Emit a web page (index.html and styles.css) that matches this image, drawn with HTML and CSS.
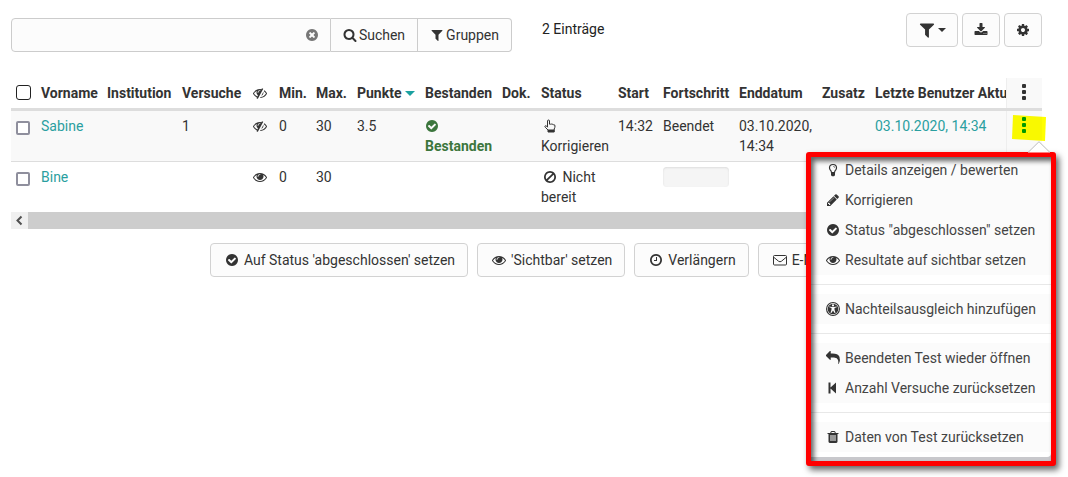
FILE: index.html
```html
<!DOCTYPE html>
<html lang="de">
<head>
<meta charset="utf-8">
<title>Testkorrektur</title>
<meta name="viewport" content="width=device-width, initial-scale=1">
<link rel="stylesheet" href="styles.css">
</head>
<body>
<svg class="sprite" aria-hidden="true">
  <symbol id="times-circle" viewBox="0 0 1792 1792"><path d="M1277 1122q0-26-19-45l-181-181 181-181q19-19 19-45 0-27-19-46l-90-90q-19-19-46-19-26 0-45 19l-181 181-181-181q-19-19-45-19-27 0-46 19l-90 90q-19 19-19 46 0 26 19 45l181 181-181 181q-19 19-19 45 0 27 19 46l90 90q19 19 46 19 26 0 45-19l181-181 181 181q19 19 45 19 27 0 46-19l90-90q19-19 19-46zm387-226q0 209-103 385.500t-279.500 279.500-385.500 103-385.500-103-279.500-279.500-103-385.500 103-385.500 279.500-279.500 385.500-103 385.500 103 279.500 279.500 103 385.500z"/></symbol>
  <symbol id="search" viewBox="0 0 1792 1792"><path d="M1216 832q0-185-131.500-316.500t-316.500-131.500-316.500 131.500-131.500 316.500 131.500 316.500 316.500 131.500 316.500-131.500 131.500-316.500zm512 832q0 52-38 90t-90 38q-54 0-90-38l-343-342q-179 124-399 124-143 0-273.500-55.500t-225-150-150-225-55.500-273.500 55.500-273.500 150-225 225-150 273.500-55.500 273.500 55.500 225 150 150 225 55.500 273.500q0 220-124 399l343 343q37 37 37 90z"/></symbol>
  <symbol id="filter" viewBox="0 0 1792 1792"><path d="M1595 295q17 41-14 70l-493 493v742q0 42-39 59-13 5-25 5-27 0-45-19l-256-256q-19-19-19-45v-486l-493-493q-31-29-14-70 17-39 59-39h1280q42 0 59 39z"/></symbol>
  <symbol id="download" viewBox="0 0 1792 1792"><path d="M1344 1344q0-26-19-45t-45-19-45 19-19 45 19 45 45 19 45-19 19-45zm256 0q0-26-19-45t-45-19-45 19-19 45 19 45 45 19 45-19 19-45zm128-224v320q0 40-28 68t-68 28h-1472q-40 0-68-28t-28-68v-320q0-40 28-68t68-28h465l135 136q58 56 136 56t136-56l136-136h464q40 0 68 28t28 68zm-325-569q17 41-14 70l-448 448q-18 19-45 19t-45-19l-448-448q-31-29-14-70 17-39 59-39h256v-448q0-26 19-45t45-19h256q26 0 45 19t19 45v448h256q42 0 59 39z"/></symbol>
  <symbol id="cog" viewBox="0 0 1792 1792"><path d="M1152 896q0-106-75-181t-181-75-181 75-75 181 75 181 181 75 181-75 75-181zm512-109v222q0 12-8 23t-20 13l-185 28q-19 54-39 91 35 50 107 138 10 12 10 25t-9 23q-27 37-99 108t-94 71q-12 0-26-9l-138-108q-44 23-91 38-16 136-29 186-7 28-36 28h-222q-14 0-24.500-8.500t-11.500-21.500l-28-184q-49-16-90-37l-141 107q-10 9-25 9-14 0-25-11-126-114-165-168-7-10-7-23 0-12 8-23 15-21 51-66.500t54-70.500q-27-50-41-99l-183-27q-13-2-21-12.500t-8-23.500v-222q0-12 8-23t19-13l186-28q14-46 39-92-40-57-107-138-10-12-10-24 0-10 9-23 26-36 98.500-107.500t94.500-71.500q13 0 26 10l138 107q44-23 91-38 16-136 29-186 7-28 36-28h222q14 0 24.500 8.500t11.500 21.500l28 184q49 16 90 37l142-107q9-9 24-9 13 0 25 10 129 119 165 170 7 8 7 22 0 12-8 23-15 21-51 66.500t-54 70.500q26 50 41 98l183 28q13 2 21 12.500t8 23.500z"/></symbol>
  <symbol id="check-circle" viewBox="0 0 1792 1792"><path d="M1412 734q0-28-18-46l-91-90q-19-19-45-19t-45 19l-408 407-226-226q-19-19-45-19t-45 19l-91 90q-18 18-18 46 0 27 18 45l362 362q19 19 45 19 27 0 46-19l543-543q18-18 18-45zm252 162q0 209-103 385.500t-279.500 279.500-385.500 103-385.500-103-279.500-279.500-103-385.500 103-385.500 279.500-279.500 385.500-103 385.500 103 279.500 279.500 103 385.500z"/></symbol>
  <symbol id="eye" viewBox="0 0 1792 1792"><path d="M1664 960q-152-236-381-353 61 104 61 225 0 185-131.500 316.500t-316.500 131.500-316.500-131.500-131.500-316.500q0-121 61-225-229 117-381 353 133 205 333.500 326.500t434.500 121.500 434.500-121.500 333.500-326.500zm-720-384q0-20-14-34t-34-14q-125 0-214.500 89.500t-89.500 214.500q0 20 14 34t34 14 34-14 14-34q0-86 61-147t147-61q20 0 34-14t14-34zm848 384q0 34-20 69-140 230-376.500 368.500t-499.500 138.500-499.500-139-376.500-368q-20-35-20-69t20-69q140-229 376.500-368t499.500-139 499.500 139 376.500 368q20 35 20 69z"/></symbol>
  <symbol id="eye-slash" viewBox="0 0 1792 1792"><path d="M555 1335l78-141q-87-63-136-159t-49-203q0-121 61-225-229 117-381 353 167 258 427 375zm389-759q0-20-14-34t-34-14q-125 0-214.500 89.500t-89.500 214.500q0 20 14 34t34 14 34-14 14-34q0-86 61-147t147-61q20 0 34-14t14-34zm363-191q0 7-1 9-106 189-316 567t-315 566l-49 89q-10 16-28 16-12 0-134-70-16-10-16-28 0-12 44-87-143-65-263.500-173t-208.500-245q-20-31-20-69t20-69q153-235 380-371t496-136q89 0 180 17l54-97q10-16 28-16 5 0 18 6t31 15.500 33 18.500 31.500 18.500 19.500 11.500q16 10 16 27zm37 447q0 139-79 253.500t-209 164.500l280-502q8 45 8 84zm448 128q0 35-20 69-39 64-109 145-150 172-347.500 267t-419.500 95l74-132q212-18 392.500-137t301.500-307q-115-179-282-294l63-112q95 64 182.500 153t144.500 184q20 34 20 69z"/></symbol>
  <symbol id="clock" viewBox="0 0 1792 1792"><path d="M1024 544v448q0 14-9 23t-23 9h-320q-14 0-23-9t-9-23v-64q0-14 9-23t23-9h224v-352q0-14 9-23t23-9h64q14 0 23 9t9 23zm416 352q0-148-73-273t-198-198-273-73-273 73-198 198-73 273 73 273 198 198 273 73 273-73 198-198 73-273zm224 0q0 209-103 385.500t-279.500 279.500-385.500 103-385.500-103-279.500-279.500-103-385.500 103-385.500 279.500-279.500 385.500-103 385.500 103 279.500 279.500 103 385.500z"/></symbol>
  <symbol id="ban" viewBox="0 0 1792 1792"><path d="M1440 893q0-161-87-295l-754 753q137 89 297 89 111 0 211.500-43.500t173.500-116.500 116-174.500 43-212.500zm-999 299l755-754q-135-91-300-91-148 0-273 73t-198 199-73 274q0 162 89 299zm1223-299q0 157-61 300t-163.500 246-245 164-298.500 61-298.500-61-245-164-163.500-246-61-300 61-299.500 163.500-245.500 245-164 298.500-61 298.500 61 245 164 163.500 245.500 61 299.500z"/></symbol>
  <symbol id="pencil" viewBox="0 0 1792 1792"><path d="M491 1536l91-91-235-235-91 91v107h128v128h107zm523-928q0-22-22-22-10 0-17 7l-542 542q-7 7-7 17 0 22 22 22 10 0 17-7l542-542q7-7 7-17zm-54-192l416 416-832 832h-416v-416zm683 96q0 53-37 90l-166 166-416-416 166-165q36-38 90-38 53 0 91 38l235 234q37 39 37 91z"/></symbol>
  <symbol id="reply" viewBox="0 0 1792 1792"><path d="M1792 1120q0 166-127 451-3 7-10.500 24t-13.500 30-13 22q-12 17-28 17-15 0-23.500-10t-8.500-25q0-9 2.500-26.500t2.500-23.500q5-68 5-123 0-112-19.500-200.500t-54-153.500-89-112-114-80.500-140-49-157.500-24.500-175-8h-224v256q0 26-19 45t-45 19-45-19l-512-512q-19-19-19-45t19-45l512-512q19-19 45-19t45 19 19 45v256h224q713 0 875 403 53 134 53 333z"/></symbol>
  <symbol id="trash" viewBox="0 0 1792 1792"><path d="M704 1376v-704q0-14-9-23t-23-9h-64q-14 0-23 9t-9 23v704q0 14 9 23t23 9h64q14 0 23-9t9-23zm256 0v-704q0-14-9-23t-23-9h-64q-14 0-23 9t-9 23v704q0 14 9 23t23 9h64q14 0 23-9t9-23zm256 0v-704q0-14-9-23t-23-9h-64q-14 0-23 9t-9 23v704q0 14 9 23t23 9h64q14 0 23-9t9-23zm-544-992h448l-48-117q-7-9-17-11h-317q-10 2-17 11zm928 32v64q0 14-9 23t-23 9h-96v948q0 83-47 143.500t-113 60.500h-832q-66 0-113-58.500t-47-141.500v-952h-96q-14 0-23-9t-9-23v-64q0-14 9-23t23-9h309l70-167q15-37 54-63t79-26h320q40 0 79 26t54 63l70 167h309q14 0 23 9t9 23z"/></symbol>
  <symbol id="dots" viewBox="0 0 16 18"><rect x="6" y="1" width="4" height="4" rx="1"/><rect x="6" y="7" width="4" height="4" rx="1"/><rect x="6" y="13" width="4" height="4" rx="1"/></symbol>
  <symbol id="envelope" viewBox="0 0 14 14"><path d="M1.500 2.500h11a1 1 0 0 1 1 1v7.500a1 1 0 0 1-1 1h-11a1 1 0 0 1-1-1V3.500a1 1 0 0 1 1-1zM.7 4.200l4.800 4Q7 9.400 8.500 8.200l4.800-4" fill="none" stroke="currentColor"/></symbol>
  <symbol id="hand" viewBox="0 0 14 14"><path d="M4.500 8.200V2q0-1 1-1t1 1v3.200h1q.7-.6 1.500.2.900-.5 1.500.3 1.500-.3 1.500 1.300 0 1.500-.8 3v3H5V11L2.200 8.200q-.7-.9.100-1.400.700-.4 1.300.3z" fill="none" stroke="currentColor" stroke-linejoin="round"/><path d="M5 10.500h6.300V13H5z"/></symbol>
  <symbol id="bulb" viewBox="0 0 14 14"><path d="M5.500 9.500Q5.300 8 4.200 6.900 3.500 6 3.500 4.800 3.500 1.500 7 1.500t3.500 3.300q0 1.200-.7 2.100Q8.700 8 8.500 9.500z" fill="none" stroke="currentColor" stroke-width="1.200"/><path d="M5 9.500h4v2.700l-1 1H6l-1-1zM7 3q2 0 2 1.700h-.6Q8.400 3.600 7 3.600z"/></symbol>
  <symbol id="access" viewBox="0 0 14 14"><path fill-rule="evenodd" d="M7 0a7 7 0 1 1 0 14A7 7 0 0 1 7 0zm0 1.100a5.900 5.900 0 1 0 0 11.800A5.900 5.900 0 0 0 7 1.100z"/><path fill-rule="evenodd" d="M7 1.700a5.300 5.300 0 1 1 0 10.600A5.300 5.300 0 0 1 7 1.700zM7 2.300a1.100 1.100 0 1 0 0 2.200 1.100 1.100 0 0 0 0-2.200zM3.300 4.400v.8l2.200.7v1.800l-1 3.100.9.300L7 8.400l1.600 2.700.9-.3-1-3.100V5.900l2.200-.7v-.8L8 5H6z"/></symbol>
  <symbol id="step-back" viewBox="0 0 14 14"><path d="M2.500 1.500h2v4.900l5.500-5v11.200l-5.500-5v4.900h-2z"/></symbol>
</svg>

<main class="page">
  <div class="toolbar">
    <form class="search" role="search">
      <div class="search-field">
        <input class="search-input" type="text" aria-label="Suche">
        <button class="clear" type="reset" aria-label="Zurücksetzen"><svg class="icon"><use href="#times-circle"/></svg></button>
      </div>
      <button class="addon" type="button"><svg class="icon"><use href="#search"/></svg>Suchen</button>
      <button class="addon" type="button"><svg class="icon"><use href="#filter"/></svg>Gruppen</button>
    </form>
    <div class="count">2 Einträge</div>
    <div class="tools">
      <button class="btn tool" type="button" aria-label="Filter"><svg class="icon large"><use href="#filter"/></svg><span class="caret"></span></button>
      <button class="btn tool" type="button" aria-label="Herunterladen"><svg class="icon"><use href="#download"/></svg></button>
      <button class="btn tool" type="button" aria-label="Einstellungen"><svg class="icon"><use href="#cog"/></svg></button>
    </div>
  </div>

  <section class="listing">
    <div class="table-wrap">
      <table class="table">
        <colgroup>
          <col class="c-check"><col class="c-name"><col class="c-inst"><col class="c-tries"><col class="c-eye"><col class="c-min"><col class="c-max"><col class="c-points"><col class="c-passed"><col class="c-doc"><col class="c-status"><col class="c-start"><col class="c-progress"><col class="c-end"><col class="c-extra"><col class="c-last"><col class="c-menu">
        </colgroup>
        <thead>
          <tr>
            <th><input class="check check-all" type="checkbox" aria-label="Alle auswählen"></th>
            <th>Vorname</th><th>Institution</th><th>Versuche</th>
            <th><svg class="icon"><use href="#eye-slash"/></svg></th>
            <th>Min.</th><th>Max.</th><th>Punkte <span class="caret sort"></span></th>
            <th>Bestanden</th><th>Dok.</th><th>Status</th><th>Start</th><th>Fortschritt</th><th>Enddatum</th><th>Zusatz</th>
            <th>Letzte Benutzer Aktu</th>
            <th class="sticky"><svg class="dots"><use href="#dots"/></svg></th>
          </tr>
        </thead>
        <tbody>
          <tr class="odd">
            <td><input class="check" type="checkbox" aria-label="Sabine auswählen"></td>
            <td><a href="#">Sabine</a></td><td></td><td>1</td>
            <td><svg class="icon"><use href="#eye-slash"/></svg></td>
            <td>0</td><td>30</td><td>3.5</td>
            <td class="passed"><svg class="icon"><use href="#check-circle"/></svg> Bestanden</td>
            <td></td>
            <td><svg class="icon fixed"><use href="#hand"/></svg> Korrigieren</td>
            <td>14:32</td><td>Beendet</td><td>03.10.2020, 14:34</td><td></td>
            <td><a href="#">03.10.2020, 14:34</a></td>
            <td class="sticky"><button class="row-menu" type="button" aria-label="Aktionen"><svg class="dots"><use href="#dots"/></svg></button></td>
          </tr>
          <tr>
            <td><input class="check" type="checkbox" aria-label="Bine auswählen"></td>
            <td><a href="#">Bine</a></td><td></td><td></td>
            <td><svg class="icon"><use href="#eye"/></svg></td>
            <td>0</td><td>30</td><td></td><td></td><td></td>
            <td><svg class="icon fixed"><use href="#ban"/></svg> Nicht bereit</td>
            <td></td><td><div class="progress"></div></td><td></td><td></td><td></td>
            <td class="sticky"></td>
          </tr>
        </tbody>
      </table>
    </div>
    <div class="scrollbar"><svg class="scroll-arrow" viewBox="0 0 17 17"><path d="M10.500 4.500l-4 4 4 4" fill="none" stroke="currentColor" stroke-width="2"/></svg></div>

    <svg class="marker" viewBox="0 0 36 26" aria-hidden="true"><path d="M2 0l33 2-1 24-33-2z"/></svg>

    <div class="callout">
      <svg class="pointer" viewBox="0 0 24 12" aria-hidden="true"><path d="M1 11.500L12 .7l11 10.800"/></svg>
      <ul class="menu">
        <li><a class="item" href="#"><svg class="icon"><use href="#bulb"/></svg>Details anzeigen / bewerten</a></li>
        <li><a class="item" href="#"><svg class="icon"><use href="#pencil"/></svg>Korrigieren</a></li>
        <li><a class="item" href="#"><svg class="icon"><use href="#check-circle"/></svg>Status "abgeschlossen" setzen</a></li>
        <li><a class="item" href="#"><svg class="icon"><use href="#eye"/></svg>Resultate auf sichtbar setzen</a></li>
        <li class="divider"></li>
        <li><a class="item" href="#"><svg class="icon"><use href="#access"/></svg>Nachteilsausgleich hinzufügen</a></li>
        <li class="divider"></li>
        <li><a class="item" href="#"><svg class="icon"><use href="#reply"/></svg>Beendeten Test wieder öffnen</a></li>
        <li><a class="item" href="#"><svg class="icon"><use href="#step-back"/></svg>Anzahl Versuche zurücksetzen</a></li>
        <li class="divider"></li>
        <li><a class="item" href="#"><svg class="icon"><use href="#trash"/></svg>Daten von Test zurücksetzen</a></li>
      </ul>
    </div>
  </section>

  <div class="actions">
    <button class="btn" type="button"><svg class="icon"><use href="#check-circle"/></svg>Auf Status 'abgeschlossen' setzen</button>
    <button class="btn" type="button"><svg class="icon"><use href="#eye"/></svg>'Sichtbar' setzen</button>
    <button class="btn" type="button"><svg class="icon"><use href="#clock"/></svg>Verlängern</button>
    <button class="btn" type="button"><svg class="icon"><use href="#envelope"/></svg>E-Mail</button>
  </div>
</main>
</body>
</html>
```
FILE: styles.css
```css
* { box-sizing: border-box; }

body {
  margin: 0;
  background: #fff;
  color: #333;
  font: 14px/20px Roboto, "Liberation Sans", sans-serif;
}

.sprite { display: none; }
a { color: #2a9fa0; text-decoration: none; }
button, input { font: inherit; color: inherit; }
button { cursor: pointer; }

.icon {
  width: 14px;
  height: 14px;
  flex: none;
  fill: currentColor;
  vertical-align: -2px;
}
.icon.large { width: 18px; height: 18px; }
.icon.fixed { margin: 0 2px; }

.page { min-height: 100vh; padding: 13px 26px 16px 11px; }

/* toolbar */
.toolbar { display: flex; align-items: flex-start; }
.search { display: flex; width: 501px; margin-top: 5px; }
.search-field { position: relative; flex: 1; }
.search-input {
  width: 100%;
  height: 34px;
  padding: 6px 32px 6px 12px;
  border: 1px solid #ccc;
  border-radius: 4px 0 0 4px;
  background: #fcfcfc;
  display: block;
}
.clear {
  position: absolute;
  top: 0;
  right: 12px;
  height: 34px;
  padding: 0;
  border: 0;
  background: none;
  color: #777;
}
.addon {
  height: 34px;
  padding: 0 12px;
  border: 1px solid #ccc;
  border-left: 0;
  background: #fcfcfc;
  display: flex;
  align-items: center;
  gap: 2px;
}
.addon:last-child { border-radius: 0 4px 4px 0; }
.count { margin: 6px 0 0 30px; color: #222; }
.tools { display: flex; gap: 4px; margin-left: auto; }

.btn {
  height: 34px;
  padding: 0 12px 0 14px;
  border: 1px solid #d2d2d2;
  border-radius: 4px;
  background: #fcfcfc;
  display: flex;
  align-items: center;
  gap: 5px;
}
.tool { padding: 0 11px; gap: 2px; }

.caret {
  display: inline-block;
  border: 4px solid transparent;
  border-top-color: #333;
  border-bottom: 0;
}
.sort {
  border-width: 5px 5px 0;
  border-top-color: #1ba1a1;
  vertical-align: 2px;
}

/* table */
.listing { position: relative; margin-top: 26px; }
.table-wrap { overflow: hidden; }
.table {
  width: 1110px;
  table-layout: fixed;
  border-collapse: separate;
  border-spacing: 0;
}
.c-check { width: 25px; }
.c-name { width: 66px; }
.c-inst { width: 75px; }
.c-tries { width: 71px; }
.c-eye { width: 26px; }
.c-min { width: 37px; }
.c-max { width: 41px; }
.c-points { width: 68px; }
.c-passed { width: 77px; }
.c-doc { width: 39px; }
.c-status { width: 77px; }
.c-start { width: 45px; }
.c-progress { width: 76px; }
.c-end { width: 83px; }
.c-extra { width: 53px; }
.c-last { width: 215px; }
.c-menu { width: 36px; }

th, td { padding: 5px; text-align: left; vertical-align: top; }
th { border-bottom: 3px solid #ddd; white-space: nowrap; font-weight: 700; }
td { height: 50px; }
.odd td { height: 51px; background: #f9f9f9; border-bottom: 1px solid #ddd; }
.passed { color: #3c763d; font-weight: 700; }

.check {
  appearance: none;
  width: 14px;
  height: 14px;
  margin: 5px 0 0;
  border: 2px solid #8f8f9d;
  border-radius: 2px;
  background: #fff;
  display: block;
}
.check-all {
  width: 15px;
  height: 15px;
  margin-top: 2px;
  border: 1px solid #222;
  border-radius: 3px;
}
.sticky {
  position: sticky;
  right: 0;
  background: #f9f9f9;
  text-align: center;
  box-shadow: inset 1px 0 #eee;
}
.dots {
  display: block;
  width: 16px;
  height: 18px;
  margin: 0 auto;
  fill: currentColor;
}
.row-menu {
  display: block;
  margin: 0 auto;
  padding: 0;
  border: 0;
  background: none;
  color: #009a9c;
}
.progress {
  height: 20px;
  border-radius: 4px;
  background: #f5f5f5;
  box-shadow: inset 0 1px 2px #ddd;
}
.scrollbar { display: flex; height: 17px; background: #cdcdcd; }
.scroll-arrow {
  width: 17px;
  height: 17px;
  background: #f0f0f0;
  color: #505050;
}

/* highlighted row action and its open menu */
.marker {
  position: absolute;
  top: 37px;
  right: -5px;
  width: 36px;
  height: 26px;
  fill: #ff0;
  mix-blend-mode: multiply;
  pointer-events: none;
}
.callout {
  position: absolute;
  z-index: 1;
  top: 74px;
  right: -14px;
  width: 250px;
  padding-bottom: 4px;
  border: 5px solid #f00;
  border-radius: 3px;
  background: #c8c8cc;
  box-shadow: 3px 4px 6px rgba(0, 0, 0, .6);
}
.callout::after {
  content: "";
  position: absolute;
  inset: 0;
  box-shadow: inset 3px 4px 5px rgba(0, 0, 0, .6);
  pointer-events: none;
}
.pointer {
  position: absolute;
  top: -16px;
  right: 0;
  width: 24px;
  height: 12px;
  fill: #fff;
  stroke: #bbb;
}
.menu {
  margin: 0;
  padding: 0 0 5px;
  list-style: none;
  border-radius: 0 0 4px;
  background: #fff;
}
.item {
  display: flex;
  align-items: center;
  gap: 5px;
  padding: 5px 10px 5px 15px;
  background: #fbfbfb;
  color: #444;
}
.item .icon { color: #333; }
.menu li:first-child .item { padding-top: 3px; }
.divider { height: 1px; margin: 9px 0; background: #e8e8e8; }

/* bulk actions */
.actions { display: flex; justify-content: center; gap: 9px; margin-top: 14px; }
.actions .btn { flex: none; }
```
